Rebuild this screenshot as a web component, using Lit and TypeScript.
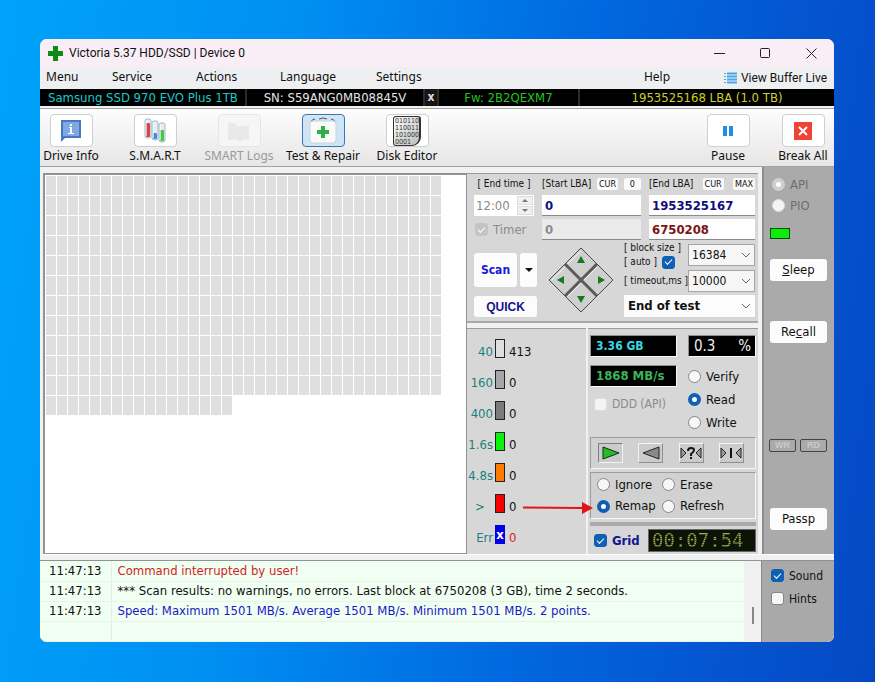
import { LitElement, html, css, svg, nothing } from "lit";
import { customElement } from "lit/decorators.js";

const BLOCKS = Array.from({ length: 413 });

const TIMINGS = [
  { label: "40", value: "413", tone: "t-light" },
  { label: "160", value: "0", tone: "t-mid" },
  { label: "400", value: "0", tone: "t-dark" },
  { label: "1.6s", value: "0", tone: "t-green" },
  { label: "4.8s", value: "0", tone: "t-orange" },
  { label: ">", value: "0", tone: "t-red" },
  { label: "Err", value: "0", tone: "t-err" },
];

const LOG = [
  { time: "11:47:13", text: "Command interrupted by user!", tone: "warn" },
  {
    time: "11:47:13",
    text: "*** Scan results: no warnings, no errors. Last block at 6750208 (3 GB), time 2 seconds.",
    tone: "plain",
  },
  {
    time: "11:47:13",
    text: "Speed: Maximum 1501 MB/s. Average 1501 MB/s. Minimum 1501 MB/s. 2 points.",
    tone: "info",
  },
  { time: "", text: "", tone: "plain" },
];

const infoIcon = html`<svg width="26" height="26" viewBox="0 0 26 26">
  <path d="M3 2h20v18H7l-4 4z" fill="#4a78bd" />
  <path d="M5 4h16v14H5z" fill="#7fa8e6" />
  <path d="M12 6h2v2h-2zM11 9h3v6h2v1h-6v-1h2v-5h-1z" fill="#fff" />
</svg>`;

const tube = (x: number, y: number, level: number, color: string) => svg`
  <rect x=${x} y=${y} width="6" height="19" rx="2" fill="#e4eef6" stroke="#a9b8c6" />
  <rect x=${x + 1} y=${y + level} width="4" height=${18 - level} rx="1" fill=${color} />
  <rect x=${x + 1} y=${y + 1} width="1" height="16" fill="#fff" opacity=".6" />`;

const tubesIcon = html`<svg width="26" height="26" viewBox="0 0 26 26">
  ${tube(3, 1, 4, "#d6453f")}${tube(10, 3, 12, "#3f8fd8")}${tube(17, 5, 7, "#4cc34c")}
</svg>`;

const folderIcon = html`<svg width="28" height="26" viewBox="0 0 28 26">
  <path d="M3 5h7l2 3h12v14h-6l-3 2-3-2H3z" fill="#e9e9e9" />
</svg>`;

const kitIcon = html`<svg width="32" height="28" viewBox="0 0 32 28">
  <path d="M4 5q1-3 4-3M12 2q4-2 8 0M24 2q3 0 4 3" fill="none" stroke="#555" />
  <rect x="3" y="4" width="26" height="22" rx="3" fill="#fafafa" stroke="#ccd3da" />
  <path d="M14 9h4v4h4v4h-4v4h-4v-4h-4v-4h4z" fill="#2fb04a" />
</svg>`;

const pauseIcon = html`<svg width="26" height="26" viewBox="0 0 26 26">
  <path d="M8 8h4v10H8zM14 8h4v10h-4z" fill="#1f8fe6" />
</svg>`;

const breakIcon = html`<svg width="26" height="26" viewBox="0 0 26 26">
  <rect x="4" y="4" width="18" height="18" fill="#f04336" />
  <path d="M9 9l8 8M17 9l-8 8" stroke="#fff" stroke-width="2" />
</svg>`;

const binaryIcon = html`<span class="binary">010110<br />110011<br />101000<br />0001</span>`;

@customElement("app-root")
export class AppRoot extends LitElement {
  static styles = css`
    :host {
      display: flex;
      box-sizing: border-box;
      min-height: 100vh;
      padding: 39px 41px 42px 40px;
      background: linear-gradient(98deg, #00a2f9 0%, #0090f2 30%, #0068e0 62%, #0553cf 85%, #0449c4 100%);
      color: #111;
      font: 12px/16px "DejaVu Sans Condensed", "DejaVu Sans", sans-serif;
    }
    * {
      box-sizing: border-box;
    }
    button,
    input,
    select {
      margin: 0;
      padding: 0;
      border: 0;
      font: inherit;
      color: inherit;
      white-space: nowrap;
    }
    svg {
      display: block;
      flex: none;
    }
    label {
      display: flex;
      align-items: center;
      gap: 5px;
      white-space: nowrap;
    }
    input[type="checkbox"],
    input[type="radio"] {
      appearance: none;
      display: grid;
      place-items: center;
      flex: none;
      width: 13px;
      height: 13px;
      border: 1px solid #858585;
      border-radius: 3px;
      background: #f7f7f7;
    }
    input[type="radio"] {
      border-radius: 50%;
    }
    input[type="radio"]:checked {
      border: 4px solid #0f5fb4;
      background: #fff;
    }
    input[type="checkbox"]:checked {
      border-color: #0f5fb4;
      background: #0f5fb4;
    }
    input[type="checkbox"]:checked::after {
      content: "";
      width: 6px;
      height: 3px;
      margin-bottom: 2px;
      border: solid #fff;
      border-width: 0 0 1px 1px;
      transform: rotate(-45deg);
    }
    input[type="checkbox"]:disabled,
    input[type="radio"]:disabled {
      border-color: #ddd;
      background: #f4f4f4;
    }
    input[type="radio"]:checked:disabled {
      border-color: #cfcfcf;
      background: #fff;
    }
    input[type="checkbox"]:checked:disabled {
      border-color: #c4c4c4;
      background: #c4c4c4;
    }
    .off {
      color: #8b8b8b;
    }
    .window {
      display: flex;
      flex: 1;
      flex-direction: column;
      min-width: 0;
      overflow: hidden;
      border-radius: 7px;
      background: #f1f1f1;
    }

    .title {
      display: flex;
      align-items: center;
      height: 28px;
      padding-left: 8px;
      background: #f9eef5;
      font: 12px/16px Roboto, sans-serif;
    }
    .title h1 {
      flex: 1;
      margin: 0 0 0 6px;
      font: inherit;
    }
    .title button {
      display: grid;
      place-items: center;
      width: 46px;
      height: 28px;
      background: none;
    }

    .menu {
      display: flex;
      height: 22px;
      padding: 0 7px 0 6px;
      background: #eeeff0;
      font: 12px/20px "Noto Sans", sans-serif;
    }
    .menu button {
      width: 84px;
      height: 20px;
      background: none;
      text-align: left;
    }
    .menu .first {
      width: 66px;
    }
    .menu .wide {
      width: 96px;
    }
    .menu .help {
      width: 80px;
      margin-left: auto;
    }
    .menu .buffer {
      display: flex;
      align-items: center;
      gap: 4px;
      width: auto;
      height: 22px;
      font-family: Roboto, sans-serif;
    }

    .strip {
      display: grid;
      grid-template-columns: 205fr 178fr 14fr 141fr 256fr;
      height: 17px;
      background: #000;
      font-size: 13px;
      line-height: 17px;
      text-align: center;
      white-space: nowrap;
    }
    .strip > * + * {
      border-left: 2px solid #2c2c2c;
    }
    .strip .model {
      padding-left: 8px;
      color: #1ec8c8;
      text-align: left;
    }
    .strip .serial {
      color: #e6e6e6;
    }
    .strip button {
      background: #151515;
      color: #ddd;
      font-weight: bold;
      font-size: 12px;
      line-height: 15px;
    }
    .strip .fw {
      color: #22c322;
    }
    .strip .lba {
      color: #cfcf28;
    }

    .tools {
      display: flex;
      gap: 22px;
      height: 59px;
      margin-top: 2px;
      padding-top: 5px;
      border-top: 1px solid #a3a3a3;
      border-bottom: 1px solid #a3a3a3;
      background: linear-gradient(#fdfdfd, #e6e6e6);
    }
    .tool {
      display: flex;
      flex-direction: column;
      align-items: center;
      width: 62px;
      background: none;
      font: 12px/18px "Noto Sans", sans-serif;
    }
    .tool .face {
      display: grid;
      place-items: center;
      width: 43px;
      height: 33px;
      border: 1px solid #cfcfcf;
      border-radius: 4px;
      background: #fff;
    }
    .tool:disabled {
      color: #9a9a9a;
    }
    .tool:disabled .face {
      border-color: #e6e6e6;
      background: #f6f6f6;
    }
    .tool.on .face {
      border-color: #3778b4;
      background: #cfe5f6;
    }
    .tool.pause {
      margin-left: auto;
    }
    .tool.break {
      margin-left: -9px;
    }
    .binary {
      width: 28px;
      height: 30px;
      padding: 1px;
      overflow: hidden;
      border: 1px solid #333;
      border-right-width: 2px;
      border-radius: 3px 3px 9px 3px;
      background: linear-gradient(135deg, #fff, #bdbdbd);
      color: #333;
      font: 7px/7px "DejaVu Sans Condensed", sans-serif;
      text-align: left;
    }

    .main {
      display: flex;
      flex: 1;
      border-bottom: 1px solid #fff;
    }
    .map {
      flex: 1;
      min-width: 0;
      margin: 6px 0 0 3px;
      padding: 1px 0 0 1px;
      overflow: hidden;
      border: 1px solid #929292;
      border-width: 2px 1px 1px 2px;
      background: #fff;
    }
    .blocks {
      display: grid;
      grid-template-columns: repeat(36, 10px);
      grid-auto-rows: 19px;
      gap: 1px;
    }
    .blocks i {
      background: #dfdfdf;
    }
    .controls {
      display: flex;
      flex-direction: column;
      gap: 5px;
      width: 291px;
      margin-top: 6px;
      background: #f1f1f1;
    }
    .setup,
    .grades,
    .modes {
      border-top: 1px solid #9b9b9b;
      background: #d7d7d7;
    }
    .setup {
      padding: 2px 3px 4px 7px;
      border-bottom: 2px solid #a8a8a8;
    }

    .fields {
      display: grid;
      grid-template-columns: 60px 99px 1fr;
      grid-template-rows: 16px 21px 21px;
      column-gap: 8px;
      row-gap: 3px;
    }
    .caps {
      display: flex;
      align-items: center;
      justify-content: space-between;
      font: 10px/12px "DejaVu Sans Condensed", sans-serif;
      white-space: nowrap;
    }
    .caps.mid {
      justify-content: center;
    }
    .caps button {
      height: 12px;
      padding: 0 2px;
      border-radius: 2px;
      background: #fafafa;
      font-size: 9px;
      line-height: 12px;
    }
    .caps .zero {
      padding: 0 6px;
    }
    .field {
      width: 100%;
      height: 21px;
      padding: 0 3px;
      border-bottom: 1px solid #8a8a8a;
      background: #fff;
      color: #10107a;
      font-size: 13px;
      font-weight: bold;
    }
    .field.cur {
      color: #7c1414;
    }
    .field:disabled {
      background: #ebebeb;
      color: #8b8b8b;
    }
    .clock {
      display: flex;
      align-items: center;
      height: 21px;
      background: #fff;
    }
    .clock input {
      flex: 1;
      width: 0;
      padding-left: 2px;
      background: none;
      color: #8b8b8b;
      font-size: 13px;
    }
    .spin {
      display: flex;
      flex-direction: column;
      gap: 1px;
      padding: 1px;
    }
    .spin button {
      display: grid;
      place-items: center;
      width: 16px;
      height: 9px;
      border: 1px solid #ddd;
      background: #f0f0f0;
    }
    .timer {
      padding-left: 1px;
      font-size: 13px;
    }

    .run {
      display: grid;
      grid-template-columns: 63px 66px 131px;
      justify-content: space-between;
      align-items: end;
      margin-top: 3px;
    }
    .starts {
      display: grid;
      grid-template-columns: 43px 1fr;
      grid-template-rows: 34px 21px;
      gap: 9px 3px;
    }
    .push {
      display: grid;
      place-items: center;
      border-radius: 3px;
      background: #fcfcfc;
      color: #14148c;
      font: bold 12px/16px "Liberation Sans", sans-serif;
    }
    .push.scan {
      color: #1818d8;
      font: bold 12px/16px "DejaVu Sans Condensed", sans-serif;
    }
    .push.quick {
      grid-column: span 2;
    }
    .pad {
      align-self: center;
    }
    .sizes {
      display: grid;
      grid-template-columns: 1fr 67px;
      grid-template-rows: 24px 22px 22px;
      row-gap: 3px;
      align-items: center;
    }
    .tiny {
      display: flex;
      flex-direction: column;
      align-items: flex-start;
      font: 10px/14px "DejaVu Sans Condensed", sans-serif;
      white-space: nowrap;
    }
    select {
      appearance: none;
      width: 100%;
      height: 22px;
      padding-left: 3px;
      border: 1px solid #a5a5a5;
      border-radius: 0;
      background: #f6f6f6
        url("data:image/svg+xml,%3Csvg xmlns='http://www.w3.org/2000/svg' width='8' height='5'%3E%3Cpath d='M0 0l4 4 4-4' fill='none' stroke='%23666'/%3E%3C/svg%3E")
        right 4px center no-repeat;
      font-size: 12px;
    }
    .finish {
      grid-column: span 2;
      border-color: #fcfcfc;
      background-color: #fcfcfc;
      font-size: 13px;
      font-weight: bold;
    }

    .lower {
      display: grid;
      flex: 1;
      grid-template-columns: 119px 1fr;
      gap: 2px;
    }
    .grades {
      display: flex;
      flex-direction: column;
      gap: 12px;
      padding-top: 10px;
    }
    .grade {
      position: relative;
      display: grid;
      grid-template-columns: 26px 10px 1fr;
      gap: 2px;
      align-items: end;
      height: 19px;
      font-size: 13px;
      line-height: 13px;
    }
    .grade .name {
      justify-self: end;
      color: #1a8080;
    }
    .grade .count {
      padding-left: 2px;
    }
    .swatch {
      height: 19px;
      border: 1px solid #222;
    }
    .t-light {
      background: #dedede;
    }
    .t-mid {
      background: #a6a6aa;
    }
    .t-dark {
      background: #7b7b7b;
    }
    .t-green {
      background: #0bf30b;
    }
    .t-orange {
      background: #f97c00;
    }
    .t-red {
      background: #f60000;
    }
    .t-err {
      border-color: #0000e6;
      background: #0000e6;
      color: #fff;
      font-weight: bold;
      line-height: 18px;
      text-align: center;
    }
    .grade .over {
      justify-self: center;
    }
    .count.bad {
      color: #e01c1c;
    }
    .pointer {
      position: absolute;
      left: 56px;
      top: 7px;
      z-index: 1;
    }

    .modes {
      display: flex;
      flex-direction: column;
      gap: 3px;
      padding: 6px 2px 2px 2px;
    }
    .speed {
      display: grid;
      grid-template-columns: 87px 1fr;
      column-gap: 11px;
    }
    .speed .readings,
    .speed .choices {
      display: flex;
      flex-direction: column;
    }
    .speed .readings {
      gap: 8px;
    }
    .lcd {
      height: 22px;
      padding-left: 5px;
      border: 1px solid;
      border-color: #8f8f8f #fafafa #fafafa #8f8f8f;
      background: #000;
      font-size: 12px;
      line-height: 20px;
      font-weight: bold;
    }
    .lcd.size {
      color: #35d9e6;
    }
    .lcd.rate {
      color: #3bb558;
      font-size: 13px;
    }
    .lcd.percent {
      display: flex;
      justify-content: space-between;
      padding-right: 4px;
      color: #eee;
      font-size: 15px;
      font-weight: normal;
    }
    .choices label {
      height: 23px;
      font-size: 13px;
    }
    .choices .percent {
      margin-bottom: 8px;
    }
    .ddd {
      height: 18px;
      padding-left: 4px;
    }
    .box {
      border: 1px solid;
      border-color: #9d9d9d #f7f7f7 #f7f7f7 #9d9d9d;
      background: #d1d1d1;
    }
    .motion {
      display: flex;
      justify-content: space-between;
      height: 32px;
      padding: 5px 11px 5px 7px;
    }
    .motion button {
      display: grid;
      place-items: center;
      width: 25px;
      border: 1px solid;
      border-color: #f4f4f4 #909090 #909090 #f4f4f4;
      background: #cbcbcb;
    }
    .motion .down {
      border-color: #808080 #f4f4f4 #f4f4f4 #808080;
    }
    .repair {
      display: grid;
      grid-template-columns: 65px 1fr;
      height: 47px;
      padding: 1px 6px;
      font-size: 13px;
    }
    .rule {
      height: 4px;
      background: #aaa;
    }
    .foot {
      display: flex;
      align-items: center;
      justify-content: space-between;
      padding-left: 4px;
    }
    .foot label {
      color: #14148c;
      font-weight: bold;
      font-size: 13px;
    }
    .timerface {
      width: 108px;
      height: 23px;
      padding-left: 3px;
      border: 1px solid #666;
      background: radial-gradient(circle, #131f0d 30%, #040803 70%) 0 0 / 2px 2px;
      font: 19px/21px "DejaVu Sans Mono", monospace;
    }
    .timerface span {
      background: repeating-linear-gradient(#a0a64e 0 1px, #565c2a 1px 2px);
      background-clip: text;
      color: transparent;
    }

    .side {
      display: flex;
      flex-direction: column;
      align-items: flex-start;
      width: 72px;
      margin-left: 4px;
      padding: 7px 7px 24px 6px;
      border-left: 2px solid #8c8c8c;
      background: #aaaaaa;
      font-size: 13px;
    }
    .side label {
      height: 21px;
      padding-left: 2px;
      color: #6f6f6f;
    }
    .led {
      width: 20px;
      height: 11px;
      margin: 12px 0 20px;
      border: 1px solid #114411;
      background: #0bee0b;
    }
    .side .push {
      width: 57px;
      height: 22px;
      color: #111;
      font: 13px/16px "DejaVu Sans Condensed", sans-serif;
    }
    .side .push + .push {
      margin-top: 40px;
    }
    .lamps {
      display: flex;
      gap: 4px;
      margin: auto -2px 56px -1px;
    }
    .lamps span {
      width: 27px;
      height: 13px;
      border: 1px solid #444;
      border-radius: 2px;
      color: #cacaca;
      font: bold 9px/11px "Liberation Sans", sans-serif;
      text-align: center;
    }

    .bottom {
      display: flex;
      margin-top: 5px;
      border-top: 1px solid #8d9590;
      background: #f1fff2;
    }
    .log {
      flex: 1;
      min-width: 0;
      border-collapse: collapse;
      font-size: 13px;
      white-space: nowrap;
    }
    .log td {
      height: 20px;
      padding: 0 5px 0 6px;
      border-bottom: 1px solid #e6f3e7;
    }
    .log td:first-child {
      width: 71px;
      padding-left: 9px;
      border-right: 1px solid #e2ecec;
    }
    .log .warn {
      color: #cf1f1f;
    }
    .log .info {
      color: #1a1ac4;
    }
    .scroll {
      width: 17px;
      padding: 46px 0 0 8px;
      background: #f0f0f0;
    }
    .scroll i {
      display: block;
      width: 2px;
      height: 17px;
      background: #868686;
    }
    .extras {
      display: flex;
      flex-direction: column;
      width: 73px;
      padding: 3px 0 0 9px;
      border-left: 1px solid #8c8c8c;
      background: #a9a9a9;
    }
    .extras label {
      height: 23px;
      font-size: 12px;
    }
  `;

  private tool(name: string, icon: unknown, kind = "") {
    return html`<button class="tool ${kind}" ?disabled=${kind === "idle"}>
      <span class="face">${icon}</span>${name}
    </button>`;
  }

  private radio(group: string, name: string, on = false) {
    return html`<label><input type="radio" name=${group} .checked=${on} />${name}</label>`;
  }

  private header() {
    return html`
      <header class="title">
        <svg width="15" height="15" viewBox="0 0 15 15">
          <path d="M5 0h5v5h5v5h-5v5H5v-5H0V5h5z" fill="#0f8a17" />
        </svg>
        <h1>Victoria 5.37 HDD/SSD | Device 0</h1>
        <button aria-label="Minimize">
          <svg width="11" height="11"><path d="M0 5.5h11" stroke="#222" /></svg>
        </button>
        <button aria-label="Maximize">
          <svg width="11" height="11">
            <rect x=".5" y=".5" width="9" height="9" rx="1" fill="none" stroke="#222" />
          </svg>
        </button>
        <button aria-label="Close">
          <svg width="11" height="11"><path d="M.5.5l10 10M10.5.5l-10 10" stroke="#222" /></svg>
        </button>
      </header>
      <nav class="menu">
        <button class="first">Menu</button>
        <button>Service</button>
        <button>Actions</button>
        <button class="wide">Language</button>
        <button>Settings</button>
        <button class="help">Help</button>
        <button class="buffer">
          <svg width="13" height="13" viewBox="0 0 13 13">
            <path d="M3 1.5h10M3 4.5h10M3 7.5h10M3 10.5h10" stroke="#4aa6e6" stroke-width="2" />
            <path d="M0 1.5h2M0 4.5h2M0 7.5h2M0 10.5h2" stroke="#4aa6e6" />
          </svg>
          View Buffer Live
        </button>
      </nav>
      <div class="strip">
        <span class="model">Samsung SSD 970 EVO Plus 1TB</span>
        <span class="serial">SN: S59ANG0MB08845V</span>
        <button>x</button>
        <span class="fw">Fw: 2B2QEXM7</span>
        <span class="lba">1953525168 LBA (1.0 TB)</span>
      </div>
      <div class="tools">
        ${this.tool("Drive Info", infoIcon)} ${this.tool("S.M.A.R.T", tubesIcon)}
        ${this.tool("SMART Logs", folderIcon, "idle")} ${this.tool("Test & Repair", kitIcon, "on")}
        ${this.tool("Disk Editor", binaryIcon)} ${this.tool("Pause", pauseIcon, "pause")}
        ${this.tool("Break All", breakIcon, "break")}
      </div>
    `;
  }

  private setup() {
    return html`<section class="setup">
      <div class="fields">
        <div class="caps mid"><label for="end-time">[ End time ]</label></div>
        <div class="caps">
          <label for="start">[Start LBA]</label><button>CUR</button><button class="zero">0</button>
        </div>
        <div class="caps">
          <label for="end">[End LBA]</label><button>CUR</button><button>MAX</button>
        </div>
        <div class="clock">
          <input id="end-time" value="12:00" disabled />
          <span class="spin">
            <button aria-label="Later"><svg width="6" height="3"><path d="M0 3l3-3 3 3z" fill="#777" /></svg></button>
            <button aria-label="Earlier"><svg width="6" height="3"><path d="M0 0l3 3 3-3z" fill="#777" /></svg></button>
          </span>
        </div>
        <input class="field" id="start" value="0" />
        <input class="field" id="end" value="1953525167" />
        <label class="timer off"><input type="checkbox" checked disabled />Timer</label>
        <input class="field" aria-label="Timer start" value="0" disabled />
        <input class="field cur" aria-label="Current LBA" value="6750208" />
      </div>
      <div class="run">
        <div class="starts">
          <button class="push scan">Scan</button>
          <button class="push" aria-label="Scan options">
            <svg width="8" height="4"><path d="M0 0h8L4 4z" fill="#111" /></svg>
          </button>
          <button class="push quick">QUICK</button>
        </div>
        <svg class="pad" width="66" height="66" viewBox="0 0 66 66">
          <g fill="#cfcfcf" stroke="#484848">
            <path d="M33 1l16 16-16 16-16-16z" />
            <path d="M17 17l16 16-16 16L1 33z" />
            <path d="M49 17l16 16-16 16-16-16z" />
            <path d="M33 33l16 16-16 16-16-16z" />
          </g>
          <path d="M17 17l32 32M49 17L17 49" stroke="#5a5a5a" stroke-width="3" />
          <g fill="none" stroke="#f4f4f4">
            <path d="M20 17L33 4M4 33l13-13M36 33l13-13M20 49l13-13" />
          </g>
          <g fill="#157a1d">
            <path d="M33 9l4 7h-8zM33 56l4-7h-8zM9 33l7-4v8zM57 33l-7-4v8z" />
          </g>
        </svg>
        <div class="sizes">
          <div class="tiny">
            <label for="size">[ block size ]</label>
            <label>[ auto ]<input type="checkbox" checked /></label>
          </div>
          <select id="size"><option>16384</option></select>
          <label class="tiny" for="timeout">[ timeout,ms ]</label>
          <select id="timeout"><option>10000</option></select>
          <select class="finish" aria-label="When finished"><option>End of test</option></select>
        </div>
      </div>
    </section>`;
  }

  private grades() {
    return html`<section class="grades">
      ${TIMINGS.map(
        (t) => html`<div class="grade">
          <span class="name ${t.label === ">" ? "over" : ""}">${t.label}</span>
          <span class="swatch ${t.tone}">${t.tone === "t-err" ? "x" : nothing}</span>
          <span class="count ${t.tone === "t-err" ? "bad" : ""}">${t.value}</span>
          ${t.label === ">"
            ? html`<svg class="pointer" width="70" height="14" viewBox="0 0 70 14">
                <path d="M0 6.5L60 7" stroke="#e01515" stroke-width="2" />
                <path d="M59 1l11 6-11 6z" fill="#e01515" />
              </svg>`
            : nothing}
        </div>`
      )}
    </section>`;
  }

  private modes() {
    return html`<section class="modes">
      <div class="speed">
        <div class="readings">
          <div class="lcd size">3.36 GB</div>
          <div class="lcd rate">1868 MB/s</div>
          <label class="ddd off"><input type="checkbox" disabled />DDD (API)</label>
        </div>
        <div class="choices">
          <div class="lcd percent"><span>0.3</span><span>%</span></div>
          ${this.radio("mode", "Verify")} ${this.radio("mode", "Read", true)} ${this.radio("mode", "Write")}
        </div>
      </div>
      <div class="box motion">
        <button class="down" aria-label="Forward">
          <svg width="18" height="14"><path d="M1 1l16 6-16 6z" fill="#1fc01f" stroke="#222" /></svg>
        </button>
        <button aria-label="Backward">
          <svg width="18" height="14"><path d="M17 1L1 7l16 6z" fill="#8a8a8a" stroke="#222" /></svg>
        </button>
        <button aria-label="Random">
          <svg width="22" height="14">
            <path d="M1 2l5 5-5 5zM21 2l-5 5 5 5z" fill="#999" stroke="#222" />
            <path d="M8 5q0-3 3-3t3 2q0 2-3 4v2M11 11v2" fill="none" stroke="#111" stroke-width="2" />
          </svg>
        </button>
        <button aria-label="Butterfly">
          <svg width="22" height="14">
            <path d="M1 2l5 5-5 5zM21 2l-5 5 5 5z" fill="#999" stroke="#222" />
            <path d="M11 2v10" stroke="#111" stroke-width="2" />
          </svg>
        </button>
      </div>
      <div class="box repair">
        ${this.radio("repair", "Ignore")} ${this.radio("repair", "Erase")}
        ${this.radio("repair", "Remap", true)} ${this.radio("repair", "Refresh")}
      </div>
      <div class="rule"></div>
      <div class="foot">
        <label><input type="checkbox" checked />Grid</label>
        <div class="timerface"><span>00:07:54</span></div>
      </div>
    </section>`;
  }

  render() {
    return html`<div class="window">
      ${this.header()}
      <main class="main">
        <div class="map"><div class="blocks">${BLOCKS.map(() => html`<i></i>`)}</div></div>
        <div class="controls">
          ${this.setup()}
          <div class="lower">${this.grades()} ${this.modes()}</div>
        </div>
        <aside class="side">
          <label><input type="radio" name="io" checked disabled />API</label>
          <label><input type="radio" name="io" disabled />PIO</label>
          <div class="led"></div>
          <button class="push"><span><u>S</u>leep</span></button>
          <button class="push"><span>Re<u>c</u>all</span></button>
          <div class="lamps"><span>WR</span><span>RD</span></div>
          <button class="push">Passp</button>
        </aside>
      </main>
      <footer class="bottom">
        <table class="log">
          <tbody>
            ${LOG.map((r) => html`<tr><td>${r.time}</td><td class=${r.tone}>${r.text}</td></tr>`)}
          </tbody>
        </table>
        <div class="scroll"><i></i></div>
        <div class="extras">
          <label><input type="checkbox" checked />Sound</label>
          <label><input type="checkbox" />Hints</label>
        </div>
      </footer>
    </div>`;
  }
}
